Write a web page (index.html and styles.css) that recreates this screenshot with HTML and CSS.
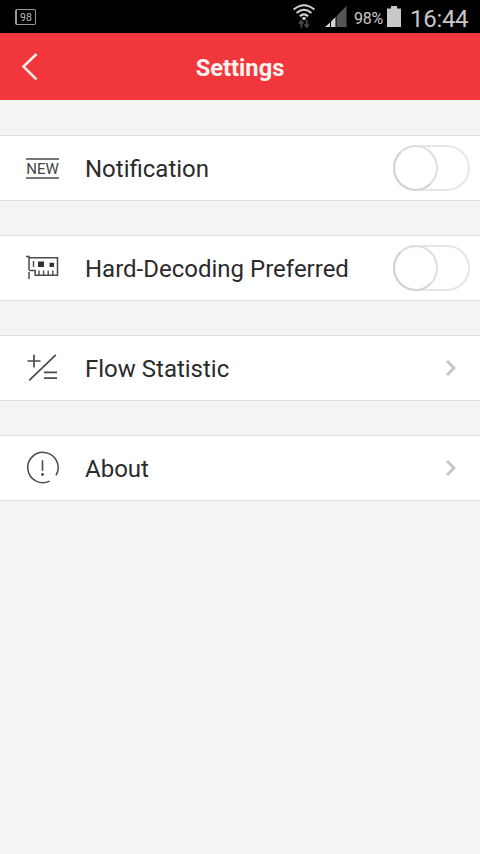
FILE: index.html
```
<!DOCTYPE html>
<html lang="en">
<head>
    <meta charset="utf-8">
    <title>Settings</title>
    <link rel="stylesheet" href="styles.css">
</head>
<body>
    <div class="statusbar">
        <div class="battery-label">98</div>
        <svg class="wifi" width="24" height="26" viewBox="0 0 24 26">
            <g fill="none" stroke="#d4d4d4" stroke-width="2">
                <path d="M1.6 6.6Q12-2.2 22.4 6.6"/>
                <path d="M4.6 10Q12 3.6 19.4 10"/>
                <path d="M7.8 13.2Q12 9.6 16.2 13.2"/>
            </g>
            <path d="M9.6 15Q12 13.2 14.4 15L12 17.6z" fill="#d4d4d4"/>
            <path d="M9.3 24.5v-6.5M7 20.5l2.3-2.5l2 2.5M14.7 17v7M12.5 21.5l2.2 2.5l2.3-2.5" fill="none" stroke="#4a4a4a" stroke-width="1.8"/>
        </svg>
        <svg class="signal" width="22" height="22" viewBox="0 0 22 22">
            <path d="M0 21L5 16.5V21z" fill="#d4d4d4"/>
            <path d="M6 21v-5.5L10.5 11v10z" fill="#d4d4d4"/>
            <path d="M11.5 21V10L21.5 0v21z" fill="#555"/>
        </svg>
        <span class="percent">98%</span>
        <svg class="battery" width="14" height="22" viewBox="0 0 14 22">
            <path d="M4 0h6v2.5h4V21H0V2.5h4z" fill="#c8c8c8"/>
        </svg>
        <span class="clock">16:44</span>
    </div>

    <div class="header">
        <svg class="back" width="18" height="30" viewBox="0 0 18 30">
            <path d="M15.5 2L2.5 14.6L15.5 27.4" fill="none" stroke="#ffecea" stroke-width="2.6"/>
        </svg>
        <h1>Settings</h1>
    </div>

    <div class="list">
        <div class="row">
            <div class="icon">
                <span class="new">NEW</span>
            </div>
            <span class="label">Notification</span>
            <div class="switch"><div class="knob"></div></div>
        </div>

        <div class="row">
            <div class="icon">
                <svg width="34" height="26" viewBox="0 0 34 26">
                    <path d="M0 1.5h3v13.5M3 17v7M3 2.8h28.5v17.4H9.2v-4.7H3" fill="none" stroke="#4a4a4a" stroke-width="1.5"/>
                    <path d="M7.5 6v6M13 20v-4.5M17.6 20v-4.5M22.2 20v-4.5M26.8 20v-4.5" stroke="#4a4a4a" stroke-width="1.4"/>
                    <path d="M12 6.5h6v5.5h-6zM23.5 7.8h4.5v4.2h-4.5z" fill="#333"/>
                </svg>
            </div>
            <span class="label">Hard-Decoding Preferred</span>
            <div class="switch"><div class="knob"></div></div>
        </div>

        <div class="row">
            <div class="icon">
                <svg width="34" height="30" viewBox="0 0 34 30">
                    <path d="M1.5 8h13M8 1.8v12.6M3.2 27.4L29.8 1.8M18 19.3h13M18 25.2h13" fill="none" stroke="#4a4a4a" stroke-width="1.7"/>
                </svg>
            </div>
            <span class="label">Flow Statistic</span>
            <svg class="arrow" width="12" height="18" viewBox="0 0 12 18">
                <path d="M2 2L9 9L2 16" fill="none" stroke="#c4c4c4" stroke-width="2.8"/>
            </svg>
        </div>

        <div class="row">
            <div class="icon">
                <svg width="34" height="34" viewBox="0 0 34 34">
                    <path d="M23.6 30.2A15.2 15.2 0 1 1 30 24.3" fill="none" stroke="#4a4a4a" stroke-width="1.5"/>
                    <path d="M16.5 9.3v10.5" stroke="#4a4a4a" stroke-width="1.6"/>
                    <circle cx="16.5" cy="23.5" r="1.4" fill="#4a4a4a"/>
                </svg>
            </div>
            <span class="label">About</span>
            <svg class="arrow" width="12" height="18" viewBox="0 0 12 18">
                <path d="M2 2L9 9L2 16" fill="none" stroke="#c4c4c4" stroke-width="2.8"/>
            </svg>
        </div>
    </div>
</body>
</html>
```
FILE: styles.css
```
html,
body {
    height: 100%;
}

body {
    margin: 0;
    background-color: #f4f4f4;
    font-family: Roboto, sans-serif;
    color: #2b2b2b;
    overflow: hidden;
}

/* Status bar */
.statusbar {
    display: flex;
    align-items: flex-start;
    box-sizing: border-box;
    height: 33px;
    padding-left: 15px;
    background-color: #000;
    color: #c8c8c8;
}

.battery-label {
    box-sizing: border-box;
    width: 21px;
    height: 16px;
    margin-top: 9px;
    border: 1px solid #999;
    border-left-width: 2px;
    border-radius: 2px;
    font-size: 10.5px;
    line-height: 15px;
    text-align: center;
    color: #bbb;
}

.wifi {
    margin: 3px 0 0 256px;
}

.signal {
    margin: 6px 0 0 9px;
}

.percent {
    width: 30px;
    margin: 8px 0 0 7px;
    font-size: 16px;
    line-height: 21px;
    letter-spacing: -0.3px;
}

.battery {
    margin: 6px 0 0 3px;
}

.clock {
    margin: 5px 0 0 9px;
    font-size: 24px;
    line-height: 28px;
    letter-spacing: -0.3px;
}

/* Title bar */
.header {
    display: flex;
    align-items: center;
    height: 67px;
    background-color: #f1373b;
}

.back {
    margin-left: 21px;
}

.header h1 {
    flex: 1;
    margin: 2px 39px 0 0;
    font-size: 23.7px;
    line-height: 28px;
    font-weight: 700;
    text-align: center;
    color: #fff3f1;
}

/* Settings list */
.list {
    display: flex;
    flex-direction: column;
    gap: 34px;
    padding-top: 35px;
}

.row {
    display: flex;
    align-items: center;
    box-sizing: border-box;
    height: 66px;
    padding: 0 10px 0 26px;
    border-top: 1px solid #dedede;
    border-bottom: 1px solid #dedede;
    background-color: #fff;
}

.icon {
    display: flex;
    width: 59px;
}

.new {
    width: 33px;
    height: 17px;
    border-top: 2px solid #777;
    border-bottom: 2px solid #777;
    font-size: 15px;
    line-height: 18px;
    text-align: center;
    color: #444;
}

.label {
    flex: 1;
    padding-top: 1px;
    font-size: 24px;
    line-height: 28px;
}

.switch {
    box-sizing: border-box;
    width: 77px;
    height: 46px;
    border: 2px solid #e6e6e6;
    border-radius: 23px;
}

.knob {
    box-sizing: border-box;
    width: 45px;
    height: 46px;
    margin: -2px 0 0 -2px;
    border: 2px solid #dfdfdf;
    border-bottom-color: #d2d2d2;
    border-left-color: #d2d2d2;
    border-radius: 50%;
}

.arrow {
    margin-right: 13px;
}
```
